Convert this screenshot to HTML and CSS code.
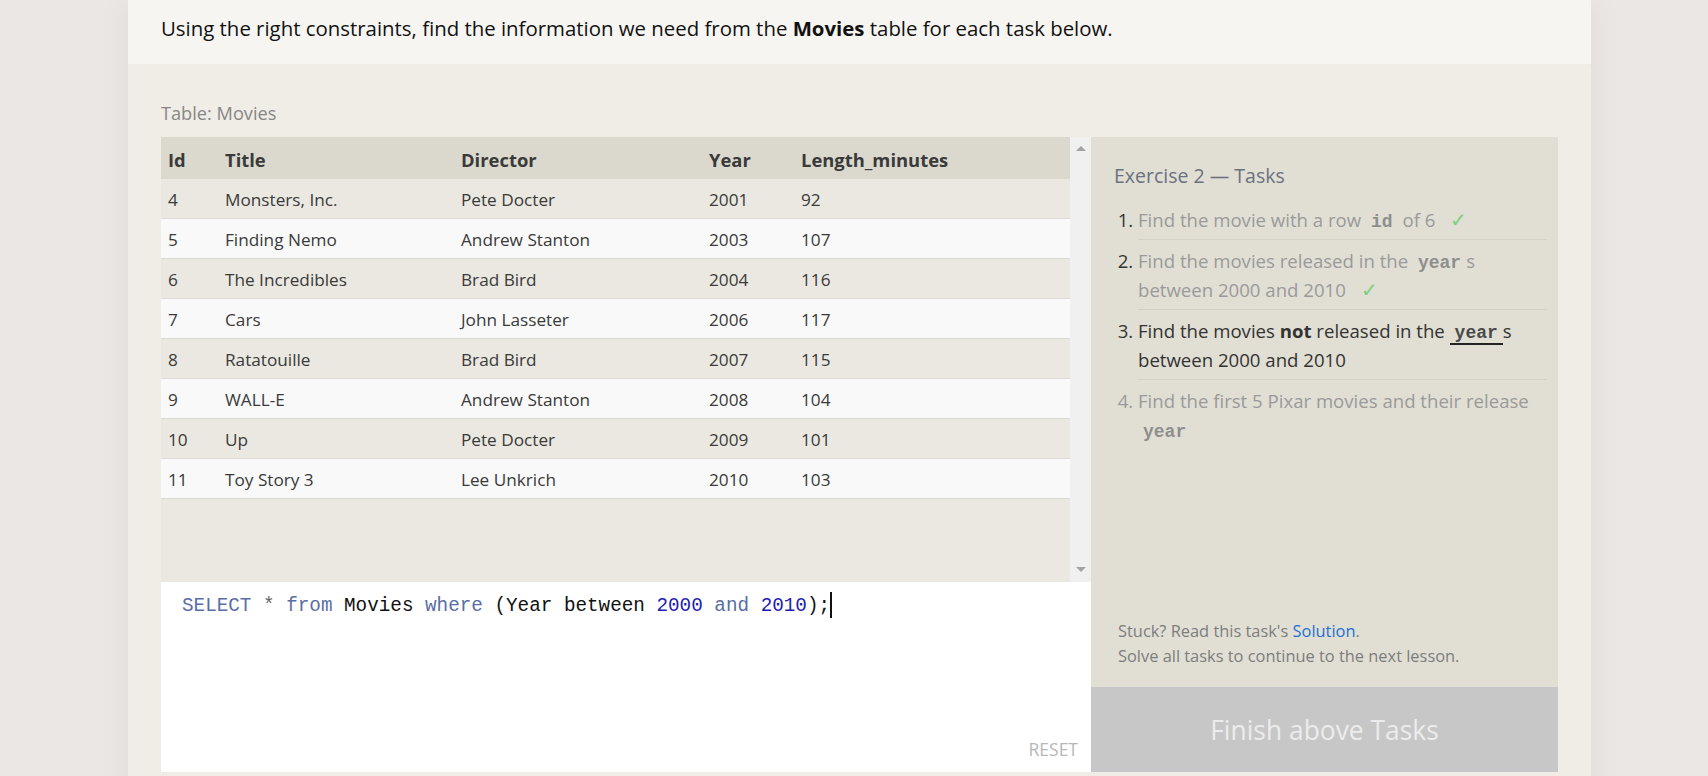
FILE: index.html
```html
<!DOCTYPE html>
<html lang="en">
<head>
<meta charset="utf-8">
<title>SQL Lesson - Exercise 2</title>
<link rel="stylesheet" href="styles.css">
</head>
<body>
<div class="card">
  <div class="intro">Using the right constraints, find the information we need from the <strong>Movies</strong> table for each task below.</div>
  <div class="exercise">
    <div class="table-label">Table: Movies</div>
    <div class="workspace">
      <div class="left">
        <div class="table-wrap">
          <div class="table-area">
            <table class="data">
              <thead>
                <tr><th class="c-id">Id</th><th class="c-title">Title</th><th class="c-dir">Director</th><th class="c-year">Year</th><th class="c-len">Length_minutes</th></tr>
              </thead>
              <tbody>
                <tr><td>4</td><td>Monsters, Inc.</td><td>Pete Docter</td><td>2001</td><td>92</td></tr>
                <tr><td>5</td><td>Finding Nemo</td><td>Andrew Stanton</td><td>2003</td><td>107</td></tr>
                <tr><td>6</td><td>The Incredibles</td><td>Brad Bird</td><td>2004</td><td>116</td></tr>
                <tr><td>7</td><td>Cars</td><td>John Lasseter</td><td>2006</td><td>117</td></tr>
                <tr><td>8</td><td>Ratatouille</td><td>Brad Bird</td><td>2007</td><td>115</td></tr>
                <tr><td>9</td><td>WALL-E</td><td>Andrew Stanton</td><td>2008</td><td>104</td></tr>
                <tr><td>10</td><td>Up</td><td>Pete Docter</td><td>2009</td><td>101</td></tr>
                <tr><td>11</td><td>Toy Story 3</td><td>Lee Unkrich</td><td>2010</td><td>103</td></tr>
              </tbody>
            </table>
          </div>
          <div class="scrollbar">
            <span class="arrow arrow-up"></span>
            <span class="arrow arrow-down"></span>
          </div>
        </div>
        <div class="editor">
          <div class="code"><span class="kw">SELECT</span> <span class="op">*</span> <span class="kw">from</span> Movies <span class="kw">where</span> (Year between <span class="num">2000</span> <span class="kw">and</span> <span class="num">2010</span>);<span class="cursor"></span></div>
          <div class="reset">RESET</div>
        </div>
      </div>
      <div class="right">
        <div class="tasks">
          <div class="tasks-title">Exercise 2 — Tasks</div>
          <ol class="task-list">
            <li class="done"><span class="t">Find the movie with a row <code>id</code> of 6 <span class="check">✓</span></span></li>
            <li class="done"><span class="t">Find the movies released in the <code>year</code>s between 2000 and 2010 <span class="check">✓</span></span></li>
            <li class="active">Find the movies <strong>not</strong> released in the <code class="u">year</code>s between 2000 and 2010</li>
            <li class="todo">Find the first 5 Pixar movies and their release <code>year</code></li>
          </ol>
          <div class="help">
            <div>Stuck? Read this task's <a href="#" class="link">Solution</a>.</div>
            <div>Solve all tasks to continue to the next lesson.</div>
          </div>
        </div>
        <div class="finish">Finish above Tasks</div>
      </div>
    </div>
  </div>
</div>
</body>
</html>
```
FILE: styles.css
```css
html, body {
  margin: 0;
  padding: 0;
}
body {
  background: #ebe7e4;
  font-family: "Open Sans", "Noto Sans", sans-serif;
  color: #333;
  overflow: hidden;
  height: 776px;
}
.card {
  margin-left: 128px;
  width: 1463px;
  box-shadow: 0 0 30px rgba(0, 0, 0, 0.06);
}
.intro {
  height: 64px;
  background: #f6f5f1;
  padding: 0 33px;
  box-sizing: border-box;
  font-size: 20.4px;
  line-height: 56px;
  color: #111;
}
.intro strong {
  font-weight: 700;
}
.exercise {
  background: #f0ede6;
  padding: 38px 33px 33px;
  border-top-right-radius: 4px;
}
.table-label {
  font-size: 18.2px;
  color: #878787;
  line-height: 22px;
  margin-bottom: 13px;
}
.workspace {
  display: flex;
}
.left {
  width: 930px;
  display: flex;
  flex-direction: column;
}
.table-wrap {
  height: 445px;
  display: flex;
  background: #eae8e1;
}
.table-area {
  width: 909px;
}
.data {
  width: 909px;
  border-collapse: collapse;
  table-layout: fixed;
  font-size: 17.2px;
}
.data th {
  background: #dbd9ce;
  height: 39px;
  text-align: left;
  font-weight: 700;
  font-size: 18.4px;
  color: #3a3a3a;
  padding: 3px 7px 0;
}
.data td {
  height: 38px;
  padding: 1px 7px 0;
  border-bottom: 1px solid #dcdad4;
  color: #3a3a3a;
}
.data tbody tr:nth-child(odd) td {
  background: #eae8e1;
}
.data tbody tr:nth-child(even) td {
  background: #f9f9f9;
}
.c-id { width: 43px; }
.c-title { width: 222px; }
.c-dir { width: 234px; }
.c-year { width: 78px; }
.c-len { width: auto; }
.scrollbar {
  width: 21px;
  background: #f0f0f0;
  position: relative;
}
.arrow {
  position: absolute;
  left: 6px;
  width: 0;
  height: 0;
  border-left: 5px solid transparent;
  border-right: 5px solid transparent;
}
.arrow-up {
  top: 9px;
  border-bottom: 5px solid #a3a3a3;
}
.arrow-down {
  bottom: 10px;
  border-top: 5px solid #a3a3a3;
}
.editor {
  height: 190px;
  background: #fff;
  display: flex;
  flex-direction: column;
}
.code {
  font-family: "Liberation Mono", "DejaVu Sans Mono", monospace;
  font-size: 19.3px;
  line-height: 26px;
  color: #111;
  padding: 10px 0 0 21px;
  white-space: pre;
}
.kw { color: #5a6ea6; }
.op { color: #666; }
.num { color: #1d1db0; }
.cursor {
  display: inline-block;
  width: 2px;
  height: 26px;
  background: #111;
  vertical-align: -7px;
}
.reset {
  margin-top: auto;
  align-self: flex-end;
  font-size: 17.5px;
  line-height: 24px;
  color: #b8b8b8;
  padding: 0 13px 11px 0;
}
.right {
  width: 467px;
  display: flex;
  flex-direction: column;
}
.tasks {
  flex: 1;
  background: #e1dfd4;
  padding: 24px 11px 0 23px;
  display: flex;
  flex-direction: column;
}
.tasks-title {
  font-size: 19.5px;
  line-height: 30px;
  color: #6b7180;
}
.task-list {
  margin: 8px 0 0;
  padding-left: 24px;
  font-size: 18.6px;
}
.task-list li {
  line-height: 29px;
  padding: 6px 0 5px;
  border-bottom: 1px solid #d4d2c7;
  color: #333;
}
.task-list li:last-child {
  border-bottom: none;
}
.task-list li.done .t {
  color: #9a9a9a;
}
.task-list li.todo {
  color: #9a9a9a;
}
.task-list code {
  font-family: "Liberation Mono", "DejaVu Sans Mono", monospace;
  font-weight: 700;
  font-size: 18px;
  line-height: 1;
  padding: 0 5px;
  color: #8e8e8e;
}
.task-list li.active code {
  color: #4a4a4a;
}
.task-list code.u {
  border-bottom: 2px solid #222;
}
.check {
  color: #7fcf7f;
  margin-left: 10px;
  line-height: 1;
  font-size: 20px;
}
.help {
  margin-top: auto;
  padding: 0 0 19px 4px;
  font-size: 16.4px;
  line-height: 25px;
  color: #7d7d7d;
}
.link {
  color: #1f6fd6;
  text-decoration: none;
}
.finish {
  height: 85px;
  background: #c7c7c7;
  color: #ececec;
  font-size: 26.4px;
  display: flex;
  align-items: center;
  justify-content: center;
}
```
